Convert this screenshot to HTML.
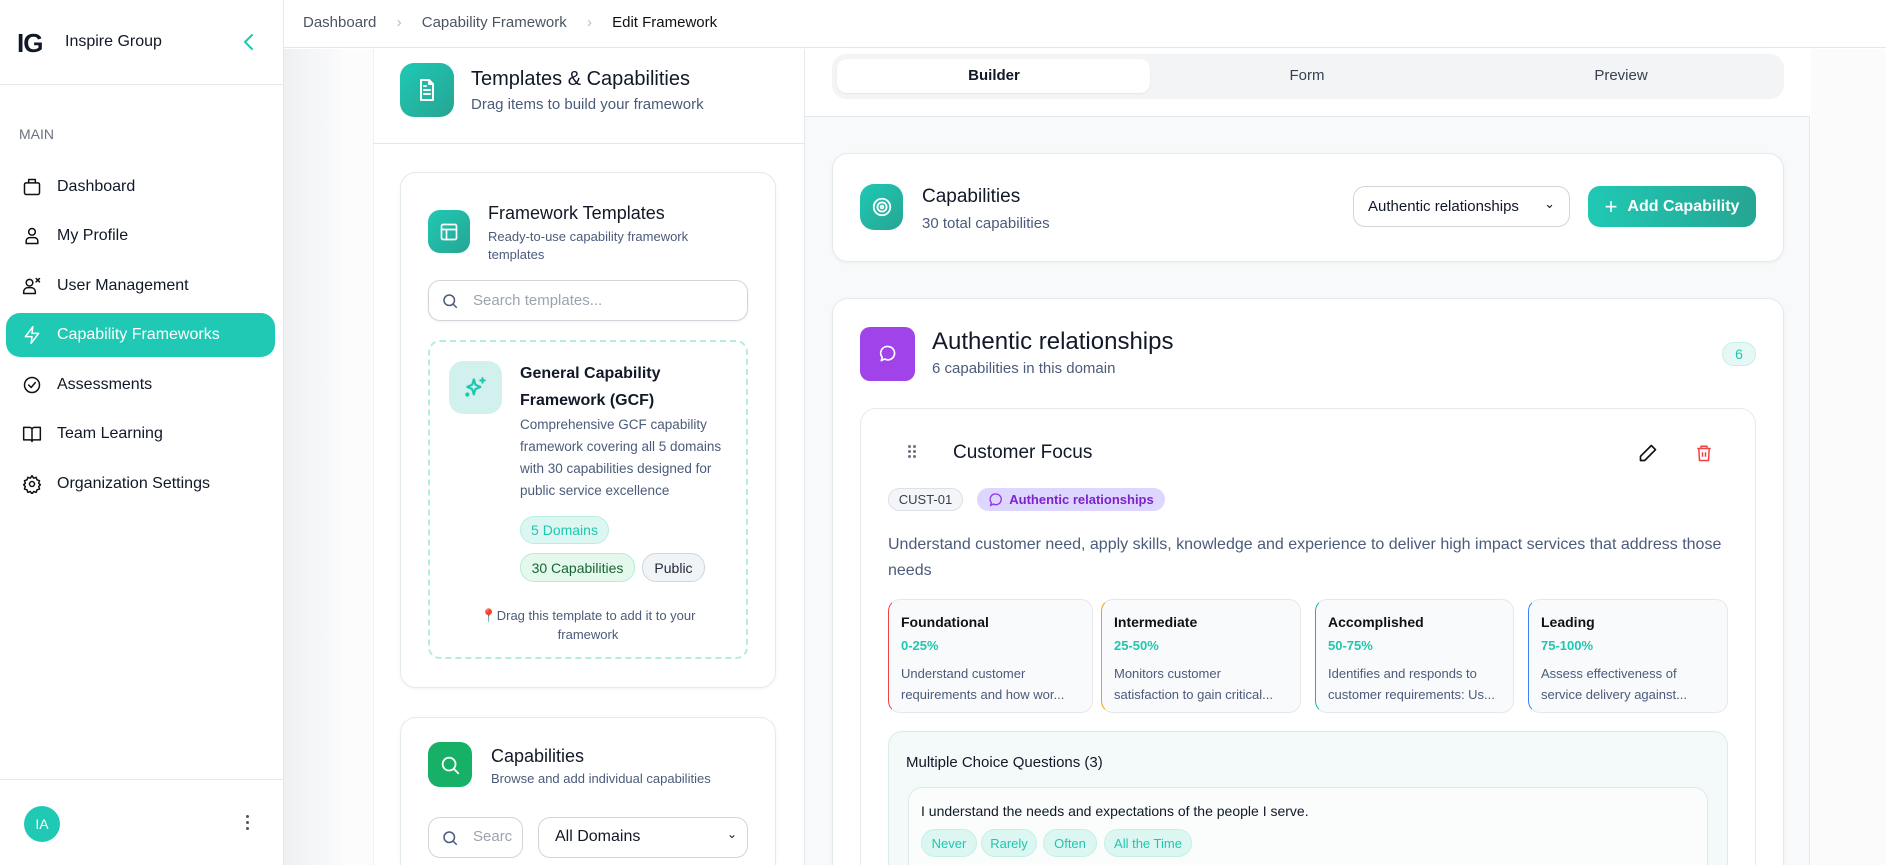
<!DOCTYPE html>
<html><head><meta charset="utf-8"><style>
*{box-sizing:border-box;margin:0;padding:0}
html,body{width:1886px;height:865px;overflow:hidden}
body{font-family:"Liberation Sans",sans-serif;background:#fff;position:relative;color:#111827}
.a{position:absolute}
.nb{border-bottom:none!important;border-bottom-left-radius:0!important;border-bottom-right-radius:0!important}
.sb{left:0;top:0;width:284px;height:865px;background:#fff;border-right:1px solid #e5e7eb;z-index:2}
.nav{left:6px;width:269px;height:44px;border-radius:14px;display:flex;align-items:center;padding-left:16px;font-size:16px;color:#111827}
.nav svg{width:20px;height:20px;margin-right:15px;fill:none;stroke:#111;stroke-width:1.8;stroke-linecap:round;stroke-linejoin:round}
.card{background:#fff;border:1px solid #e3ebeb;border-radius:16px;box-shadow:0 1px 3px rgba(0,0,0,.05)}
.ic{border-radius:12px;display:flex;align-items:center;justify-content:center}
.ic svg{fill:none;stroke:#fff;stroke-width:2;stroke-linecap:round;stroke-linejoin:round}
.pill{border-radius:14px;font-size:14px;display:flex;align-items:center;justify-content:center}
.lvl{top:599px;height:114px;background:#f9fafb;border:1px solid #e5e7eb;border-radius:12px;padding:14px 12px;font-size:13px}
.lvl b{display:block;font-size:14px;font-weight:600;color:#111;margin-bottom:8px}
.lvl i{display:block;font-style:normal;color:#1fc7b0;font-weight:600;margin-bottom:10px}
.lvl span{color:#4b5b7a;line-height:21px;display:block}
.chip{top:829px;height:28px;background:#dcf7f1;border:1px solid #c5efe6;color:#1fc7b0;border-radius:14px;font-size:13px;display:flex;align-items:center;justify-content:center}
</style></head><body>
<div class="a sb">
 <div class="a" style="left:17px;top:28px;font-size:26px;font-weight:900;letter-spacing:-1px">IG</div>
 <div class="a" style="left:65px;top:33px;font-size:16px">Inspire Group</div>
 <svg class="a" style="left:241px;top:33px" width="16" height="18" viewBox="0 0 16 18"><path d="M11 2 4 9l7 7" fill="none" stroke="#1fc7b0" stroke-width="2" stroke-linecap="round"/></svg>
 <div class="a" style="left:0;top:84px;width:284px;border-top:1px solid #e5e7eb"></div>
 <div class="a" style="left:19px;top:126px;font-size:14px;color:#6b7280">MAIN</div>
 <div class="a nav" style="top:165px"><svg viewBox="0 0 24 24"><rect x="3" y="7" width="18" height="14" rx="2"/><path d="M8 7V3h8v4"/></svg>Dashboard</div>
 <div class="a nav" style="top:214px"><svg viewBox="0 0 24 24"><circle cx="12" cy="7" r="4"/><path d="M5 21v-3a4 4 0 0 1 4-4h6a4 4 0 0 1 4 4v3z"/></svg>My Profile</div>
 <div class="a nav" style="top:264px"><svg viewBox="0 0 24 24"><circle cx="9" cy="8" r="4"/><path d="M2 21v-2a5 5 0 0 1 5-5h4a5 5 0 0 1 5 5v2zM17 3l4 4M21 3l-4 4"/></svg>User Management</div>
 <div class="a nav" style="top:313px;background:#1fc9b4;color:#fff"><svg viewBox="0 0 24 24" style="stroke:#fff"><path d="M13 2 4 14h8l-1 8 9-12h-8z"/></svg>Capability Frameworks</div>
 <div class="a nav" style="top:363px"><svg viewBox="0 0 24 24"><circle cx="12" cy="12" r="9"/><path d="m8 12 3 3 5-6"/></svg>Assessments</div>
 <div class="a nav" style="top:412px"><svg viewBox="0 0 24 24"><path d="M2 4h7a3 3 0 0 1 3 3v14a2 2 0 0 0-2-2H2zM22 4h-7a3 3 0 0 0-3 3v14a2 2 0 0 1 2-2h8z"/></svg>Team Learning</div>
 <div class="a nav" style="top:462px"><svg viewBox="0 0 24 24"><circle cx="12" cy="12" r="3"/><path d="M12 2l2 3 3-1 1 3 3 1-1 3 2 2-2 2 1 3-3 1-1 3-3-1-2 3-2-3-3 1-1-3-3-1 1-3-2-2 2-2-1-3 3-1 1-3 3 1z"/></svg>Organization Settings</div>
 <div class="a" style="left:0;top:779px;width:284px;border-top:1px solid #e5e7eb"></div>
 <div class="a" style="left:24px;top:806px;width:36px;height:36px;border-radius:50%;background:#1fc9b4;color:#fff;font-size:14px;display:flex;align-items:center;justify-content:center">IA</div>
 <div class="a" style="left:246px;top:815px;width:4px;font-size:0"><div style="width:3px;height:3px;background:#555;border-radius:50%;margin-bottom:3px"></div><div style="width:3px;height:3px;background:#555;border-radius:50%;margin-bottom:3px"></div><div style="width:3px;height:3px;background:#555;border-radius:50%"></div></div>
</div>
<div class="a" style="left:284px;top:0;width:1602px;height:48px;background:#fff;border-bottom:1px solid #e5e7eb"></div>
<div class="a" style="left:303px;top:14px;font-size:15px;color:#4b5563">Dashboard <span style="color:#bbb;margin:0 16px">›</span> Capability Framework <span style="color:#bbb;margin:0 16px">›</span> <span style="color:#111">Edit Framework</span></div>
<div class="a" style="left:284px;top:49px;width:89px;height:816px;background:linear-gradient(90deg,#eef0f2,#fcfcfd 70%)"></div>
<div class="a" style="left:373px;top:49px;width:432px;height:816px;background:#fff;border-right:1px solid #e5e7eb;border-left:1px solid #eef0f2"></div>
<div class="a ic" style="left:400px;top:63px;width:54px;height:54px;background:linear-gradient(135deg,#1fc9b4,#26a593);border-radius:14px"><svg width="24" height="24" viewBox="0 0 24 24"><path d="M14 2H6v20h12V6zM14 2v4h4M9 12h6M9 16h6M9 8h2"/></svg></div>
<div class="a" style="left:471px;top:68px;font-size:20px;font-weight:500">Templates &amp; Capabilities</div>
<div class="a" style="left:471px;top:96px;font-size:15px;color:#4b5b7a">Drag items to build your framework</div>
<div class="a" style="left:373px;top:143px;width:432px;border-top:1px solid #e5e7eb"></div>
<div class="a card" style="left:400px;top:172px;width:376px;height:516px"></div>
<div class="a ic" style="left:428px;top:210px;width:42px;height:43px;background:linear-gradient(135deg,#1fc9b4,#26a593)"><svg width="20" height="20" viewBox="0 0 24 24"><rect x="3" y="3" width="18" height="18" rx="2"/><path d="M3 9h18M9 9v12"/></svg></div>
<div class="a" style="left:488px;top:203px;font-size:18px">Framework Templates</div>
<div class="a" style="left:488px;top:228px;font-size:13px;color:#4b5b7a;line-height:18px;width:240px">Ready-to-use capability framework templates</div>
<div class="a" style="left:428px;top:280px;width:320px;height:41px;border:1px solid #d1d5db;border-radius:12px;box-shadow:0 1px 2px rgba(0,0,0,.06)"></div>
<svg class="a" style="left:441px;top:292px" width="18" height="18" viewBox="0 0 24 24"><circle cx="11" cy="11" r="7" fill="none" stroke="#4b5b7a" stroke-width="2"/><path d="m16 16 5 5" stroke="#4b5b7a" stroke-width="2"/></svg>
<div class="a" style="left:473px;top:292px;font-size:15px;color:#9ca3af">Search templates...</div>
<div class="a" style="left:428px;top:340px;width:320px;height:319px;border:2px dashed #b5ece2;border-radius:12px"></div>
<div class="a ic" style="left:449px;top:361px;width:53px;height:53px;background:#d2f1ee;border-radius:14px"><svg width="26" height="26" viewBox="0 0 24 24" style="stroke:#1fc7b0"><path d="M10 4l1.5 5L16 11l-4.5 2L10 18l-1.5-5L4 11l4.5-2zM18 3v4M16 5h4M5 18a1 1 0 1 0 0 .1"/></svg></div>
<div class="a" style="left:520px;top:360px;font-size:16px;font-weight:600;line-height:27px;width:200px">General Capability Framework (GCF)</div>
<div class="a" style="left:520px;top:414px;font-size:13.5px;color:#4b5b7a;line-height:22px;width:210px">Comprehensive GCF capability framework covering all 5 domains with 30 capabilities designed for public service excellence</div>
<div class="a pill" style="left:520px;top:516px;width:89px;height:28px;background:#dcf7f1;border:1px solid #b9ede2;color:#1fc7b0">5 Domains</div>
<div class="a pill" style="left:520px;top:553px;width:115px;height:29px;background:#e4f8ec;border:1px solid #b9ecd0;color:#166534">30 Capabilities</div>
<div class="a pill" style="left:642px;top:553px;width:63px;height:29px;background:#f1f4f7;border:1px solid #cfd6de;color:#1f2937">Public</div>
<div class="a" style="left:473px;top:606px;width:230px;text-align:center;font-size:13px;color:#4b5b7a;line-height:19px"><span style="color:#d32">📍</span>Drag this template to add it to your framework</div>
<div class="a card nb" style="left:400px;top:717px;width:376px;height:148px"></div>
<div class="a ic" style="left:428px;top:742px;width:44px;height:45px;background:#16b067"><svg width="22" height="22" viewBox="0 0 24 24"><circle cx="11" cy="11" r="7"/><path d="m16 16 5 5"/></svg></div>
<div class="a" style="left:491px;top:746px;font-size:18px">Capabilities</div>
<div class="a" style="left:491px;top:771px;font-size:13px;color:#4b5b7a">Browse and add individual capabilities</div>
<div class="a" style="left:428px;top:817px;width:95px;height:41px;border:1px solid #d1d5db;border-radius:12px"></div>
<svg class="a" style="left:441px;top:829px" width="18" height="18" viewBox="0 0 24 24"><circle cx="11" cy="11" r="7" fill="none" stroke="#4b5b7a" stroke-width="2"/><path d="m16 16 5 5" stroke="#4b5b7a" stroke-width="2"/></svg>
<div class="a" style="left:473px;top:828px;font-size:15px;color:#9ca3af">Searc</div>
<div class="a" style="left:538px;top:817px;width:210px;height:41px;border:1px solid #d1d5db;border-radius:12px;font-size:16px;padding:10px 16px">All Domains<span style="position:absolute;right:10px;top:9px;font-size:12px">⌄</span></div>
<div class="a" style="left:805px;top:49px;width:1005px;height:816px;background:#f8f9fa;border-right:1px solid #e5e7eb"></div>
<div class="a" style="left:1811px;top:49px;width:75px;height:816px;background:#fbfbfc"></div>
<div class="a" style="left:805px;top:49px;width:1005px;height:68px;background:#fff;border-bottom:1px solid #e5e7eb"></div>
<div class="a" style="left:832px;top:54px;width:952px;height:45px;background:#f3f4f6;border-radius:14px"></div>
<div class="a" style="left:837px;top:59px;width:313px;height:34px;background:#fff;border-radius:10px;box-shadow:0 1px 2px rgba(0,0,0,.06)"></div>
<div class="a" style="left:994px;top:67px;transform:translateX(-50%);font-size:15px;font-weight:600">Builder</div>
<div class="a" style="left:1307px;top:67px;transform:translateX(-50%);font-size:15px;color:#374151">Form</div>
<div class="a" style="left:1621px;top:67px;transform:translateX(-50%);font-size:15px;color:#374151">Preview</div>
<div class="a card" style="left:832px;top:153px;width:952px;height:109px"></div>
<div class="a ic" style="left:860px;top:184px;width:43px;height:46px;background:linear-gradient(135deg,#1fc9b4,#26a593);border-radius:14px"><svg width="22" height="22" viewBox="0 0 24 24"><circle cx="12" cy="12" r="9"/><circle cx="12" cy="12" r="5"/><circle cx="12" cy="12" r="1.5"/></svg></div>
<div class="a" style="left:922px;top:186px;font-size:19px;font-weight:500">Capabilities</div>
<div class="a" style="left:922px;top:215px;font-size:15px;color:#4b5b7a">30 total capabilities</div>
<div class="a" style="left:1353px;top:186px;width:217px;height:41px;background:#fff;border:1px solid #d1d5db;border-radius:12px;font-size:15px;padding:11px 14px">Authentic relationships <span style="position:absolute;right:14px;top:9px;font-size:13px">⌄</span></div>
<div class="a" style="left:1588px;top:186px;width:168px;height:41px;background:linear-gradient(90deg,#1fc9b4,#26a593);border-radius:12px;color:#fff;font-size:16px;font-weight:600;display:flex;align-items:center;justify-content:center"><span style="font-size:22px;font-weight:300;margin-right:10px">+</span>Add Capability</div>
<div class="a card nb" style="left:832px;top:298px;width:952px;height:567px"></div>
<div class="a ic" style="left:860px;top:327px;width:55px;height:54px;background:#a044ea;border-radius:10px"><svg width="20" height="20" viewBox="0 0 24 24"><path d="M12 3a8 8 0 1 1-4 15l-4 2 1-4A8 8 0 0 1 12 3z"/></svg></div>
<div class="a" style="left:932px;top:328px;font-size:24px;font-weight:500">Authentic relationships</div>
<div class="a" style="left:932px;top:360px;font-size:15px;color:#4b5b7a">6 capabilities in this domain</div>
<div class="a pill" style="left:1722px;top:342px;width:34px;height:24px;background:#e6f8f5;border:1px solid #c5efe6;color:#1fc7b0;font-size:14px">6</div>
<div class="a card nb" style="left:860px;top:408px;width:896px;height:457px;box-shadow:none"></div>
<div class="a" style="left:908px;top:445px;width:8px;font-size:0"><div style="display:grid;grid-template-columns:3px 3px;gap:2px">
<i style="width:3px;height:3px;background:#6b7280;border-radius:50%"></i><i style="width:3px;height:3px;background:#6b7280;border-radius:50%"></i><i style="width:3px;height:3px;background:#6b7280;border-radius:50%"></i><i style="width:3px;height:3px;background:#6b7280;border-radius:50%"></i><i style="width:3px;height:3px;background:#6b7280;border-radius:50%"></i><i style="width:3px;height:3px;background:#6b7280;border-radius:50%"></i></div></div>
<div class="a" style="left:953px;top:442px;font-size:19px;font-weight:500">Customer Focus</div>
<svg class="a" style="left:1638px;top:443px" width="20" height="20" viewBox="0 0 24 24"><path d="M16 3l5 5L8 21H3v-5z" fill="none" stroke="#111" stroke-width="2" stroke-linejoin="round"/></svg>
<svg class="a" style="left:1695px;top:443px" width="18" height="20" viewBox="0 0 24 24"><path d="M3 6h18M8 6V3h8v3M5 6l1 16h12l1-16M10 11v6M14 11v6" fill="none" stroke="#ef4444" stroke-width="2"/></svg>
<div class="a pill" style="left:888px;top:488px;width:75px;height:23px;background:#f3f5f8;border:1px solid #dbe1e8;color:#374151;font-size:13px">CUST-01</div>
<div class="a pill" style="left:977px;top:488px;width:188px;height:23px;background:#ddd6fe;color:#7e22ce;font-size:13px;font-weight:600"><svg width="16" height="16" viewBox="0 0 24 24" style="margin-right:5px"><path d="M12 3a8 8 0 1 1-4 15l-4 2 1-4A8 8 0 0 1 12 3z" fill="none" stroke="#9333ea" stroke-width="2"/></svg>Authentic relationships</div>
<div class="a" style="left:888px;top:532px;width:840px;font-size:16px;line-height:26px;color:#4b5b7a">Understand customer need, apply skills, knowledge and experience to deliver high impact services that address those needs</div>
<div class="a lvl" style="left:888px;width:205px;border-left:1px solid #ef4444"><b>Foundational</b><i>0-25%</i><span>Understand customer requirements and how wor...</span></div>
<div class="a lvl" style="left:1101px;width:200px;border-left:1px solid #f59e0b"><b>Intermediate</b><i>25-50%</i><span>Monitors customer satisfaction to gain critical...</span></div>
<div class="a lvl" style="left:1315px;width:199px;border-left:1px solid #14b8a6"><b>Accomplished</b><i>50-75%</i><span>Identifies and responds to customer requirements: Us...</span></div>
<div class="a lvl" style="left:1528px;width:200px;border-left:1px solid #3b82f6"><b>Leading</b><i>75-100%</i><span>Assess effectiveness of service delivery against...</span></div>
<div class="a nb" style="left:888px;top:731px;width:840px;height:134px;background:#f3faf9;border:1px solid #d9ece9;border-radius:14px"></div>
<div class="a" style="left:906px;top:754px;font-size:15px;font-weight:500">Multiple Choice Questions (3)</div>
<div class="a nb" style="left:908px;top:787px;width:800px;height:78px;background:#fafdfc;border:1px solid #d9ece9;border-radius:14px"></div>
<div class="a" style="left:921px;top:803px;font-size:14px;font-weight:500">I understand the needs and expectations of the people I serve.</div>
<div class="a chip" style="left:921px;width:56px">Never</div>
<div class="a chip" style="left:981px;width:56px">Rarely</div>
<div class="a chip" style="left:1043px;width:54px">Often</div>
<div class="a chip" style="left:1104px;width:88px">All the Time</div>
</body></html>
